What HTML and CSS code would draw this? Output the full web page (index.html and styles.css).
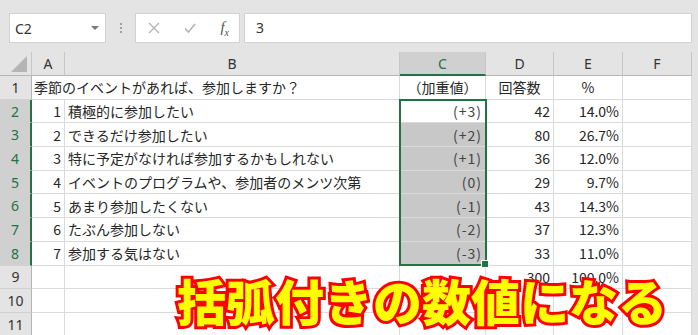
FILE: index.html
```html
<html><head>
	<meta charset="UTF-8">
	<link rel="stylesheet" href="styles.css">
</head>
<body>
	<div class="toolbar">
		<div class="namebox"><span>C2</span><span class="drop"></span></div>
		<div class="grip"><i></i><i></i><i></i></div>
		<div class="fxbox">
			<svg width="12" height="12" viewBox="0 0 12 12"><path d="M1 1L11 11M11 1L1 11" stroke="#b4b4b4" stroke-width="1.4" fill="none"/></svg>
			<svg width="12" height="12" viewBox="0 0 12 12"><path d="M1 6.5L4.5 10L11 2" stroke="#b4b4b4" stroke-width="1.6" fill="none"/></svg>
			<span class="fx">f<sub>x</sub></span>
		</div>
		<div class="formula">3</div>
	</div>

	<div class="sheet">
		<div class="corner"><svg width="18" height="18" viewBox="0 0 18 18"><polygon points="17,1 17,17 1,17" fill="#b5b5b5"/></svg></div>
		<div class="ch">A</div>
		<div class="ch">B</div>
		<div class="ch on">C</div>
		<div class="ch">D</div>
		<div class="ch">E</div>
		<div class="ch">F</div>

		<div class="rh">1</div>
		<div class="c wide">季節のイベントがあれば、参加しますか？</div>
		<div class="c m">（加重値）</div>
		<div class="c m">回答数</div>
		<div class="c m">%</div>
		<div class="c"></div>

		<div class="rh on">2</div>
		<div class="c r">1</div>
		<div class="c">積極的に参加したい</div>
		<div class="c r v">(+3)</div>
		<div class="c r">42</div>
		<div class="c r">14.0%</div>
		<div class="c"></div>

		<div class="rh on">3</div>
		<div class="c r">2</div>
		<div class="c">できるだけ参加したい</div>
		<div class="c r v g">(+2)</div>
		<div class="c r">80</div>
		<div class="c r">26.7%</div>
		<div class="c"></div>

		<div class="rh on">4</div>
		<div class="c r">3</div>
		<div class="c">特に予定がなければ参加するかもしれない</div>
		<div class="c r v g">(+1)</div>
		<div class="c r">36</div>
		<div class="c r">12.0%</div>
		<div class="c"></div>

		<div class="rh on">5</div>
		<div class="c r">4</div>
		<div class="c">イベントのプログラムや、参加者のメンツ次第</div>
		<div class="c r v g">(0)</div>
		<div class="c r">29</div>
		<div class="c r">9.7%</div>
		<div class="c"></div>

		<div class="rh on">6</div>
		<div class="c r">5</div>
		<div class="c">あまり参加したくない</div>
		<div class="c r v g">(-1)</div>
		<div class="c r">43</div>
		<div class="c r">14.3%</div>
		<div class="c"></div>

		<div class="rh on">7</div>
		<div class="c r">6</div>
		<div class="c">たぶん参加しない</div>
		<div class="c r v g">(-2)</div>
		<div class="c r">37</div>
		<div class="c r">12.3%</div>
		<div class="c"></div>

		<div class="rh on">8</div>
		<div class="c r">7</div>
		<div class="c">参加する気はない</div>
		<div class="c r v g">(-3)</div>
		<div class="c r">33</div>
		<div class="c r">11.0%</div>
		<div class="c"></div>

		<div class="rh">9</div>
		<div class="c"></div>
		<div class="c"></div>
		<div class="c"></div>
		<div class="c r">300</div>
		<div class="c r">100.0%</div>
		<div class="c"></div>

		<div class="rh">10</div>
		<div class="c"></div>
		<div class="c"></div>
		<div class="c"></div>
		<div class="c"></div>
		<div class="c"></div>
		<div class="c"></div>

		<div class="rh">11</div>
		<div class="c"></div>
		<div class="c"></div>
		<div class="c"></div>
		<div class="c"></div>
		<div class="c"></div>
		<div class="c"></div>

		<div class="selection"></div>
		<div class="caption">括弧付きの数値になる</div>
	</div>
</body></html>
```

FILE: styles.css
```css
* {
	box-sizing: border-box;
}
body {
	margin: 0;
	width: 698px;
	height: 335px;
	overflow: hidden;
	background-color: #e4e4e4;
	color: #262626;
	font-family: "Noto Sans CJK JP", sans-serif;
	font-size: 14px;
}
.toolbar {
	height: 52px;
	display: flex;
	align-items: flex-start;
	padding: 13px 0 0 9px;
}
.namebox {
	width: 97px;
	height: 30px;
	background-color: #fff;
	border: 1px solid #d2d2d2;
	display: flex;
	align-items: center;
	justify-content: space-between;
	padding: 0 6px 0 5px;
	font-family: "Noto Sans", sans-serif;
	color: #333;
}
.drop {
	width: 0;
	height: 0;
	border-left: 4px solid transparent;
	border-right: 4px solid transparent;
	border-top: 4px solid #777;
}
.grip {
	width: 29px;
	height: 30px;
	display: flex;
	flex-direction: column;
	align-items: center;
	justify-content: center;
	gap: 2px;
}
.grip i {
	width: 2px;
	height: 2px;
	background-color: #a0a0a0;
}
.fxbox {
	width: 105px;
	height: 30px;
	background-color: #fff;
	border: 1px solid #d2d2d2;
	display: flex;
	align-items: center;
	justify-content: space-between;
	padding: 0 10px 0 12px;
}
.fx {
	font-family: "Liberation Serif", serif;
	font-style: italic;
	font-size: 15px;
	color: #555;
}
.fx sub {
	font-size: 10px;
}
.formula {
	width: 448px;
	height: 30px;
	margin-left: 4px;
	background-color: #fff;
	border: 1px solid #d2d2d2;
	padding-left: 11px;
	line-height: 28px;
	font-family: "Noto Sans", sans-serif;
	color: #333;
}
.sheet {
	position: relative;
	width: 692px;
	display: grid;
	grid-template-columns: 32px 33px 335px 86px 68px 69px 69px;
	grid-template-rows: 24px;
	grid-auto-rows: 23.7px;
	background-color: #fff;
}
.corner {
	background-color: #e4e4e4;
	border-right: 1px solid #c6c6c6;
	border-bottom: 1px solid #b4b4b4;
	display: flex;
	align-items: flex-end;
	justify-content: flex-end;
	padding: 0 3px 2px 0;
}
.ch {
	background-color: #e4e4e4;
	border-right: 1px solid #c6c6c6;
	border-bottom: 1px solid #b4b4b4;
	display: flex;
	align-items: center;
	justify-content: center;
	font-family: "Noto Sans", sans-serif;
	color: #333;
}
.ch.on {
	background-color: #d0d0d0;
	color: #217346;
	border-bottom: 2px solid #217346;
}
.rh {
	background-color: #e4e4e4;
	border-right: 1px solid #b4b4b4;
	border-bottom: 1px solid #d0d0d0;
	display: flex;
	align-items: center;
	justify-content: center;
	font-family: "Noto Sans", sans-serif;
	color: #333;
}
.rh.on {
	background-color: #d0d0d0;
	color: #217346;
	border-right: 2px solid #217346;
}
.c {
	border-right: 1px solid #dadada;
	border-bottom: 1px solid #dadada;
	display: flex;
	align-items: center;
	padding: 0 3px;
	white-space: nowrap;
}
.c.wide {
	grid-column: span 2;
	padding-left: 2px;
}
.c.r {
	justify-content: flex-end;
}
.c.m {
	justify-content: center;
}
.c.v {
	color: #444;
	letter-spacing: 1px;
}
.c.g {
	background-color: #c8c8c8;
}
.selection {
	position: absolute;
	left: 399px;
	top: 47px;
	width: 88px;
	height: 167px;
	border: 2px solid #217346;
}
.selection::after {
	content: "";
	position: absolute;
	right: -4px;
	bottom: -4px;
	width: 6px;
	height: 6px;
	background-color: #217346;
	border: 1px solid #fff;
}
.caption {
	position: absolute;
	left: 177px;
	top: 223px;
	font-size: 49px;
	font-weight: 900;
	line-height: 1;
	white-space: nowrap;
	color: #ffff00;
	-webkit-text-stroke: 6px #ff0000;
	paint-order: stroke fill;
}
```
